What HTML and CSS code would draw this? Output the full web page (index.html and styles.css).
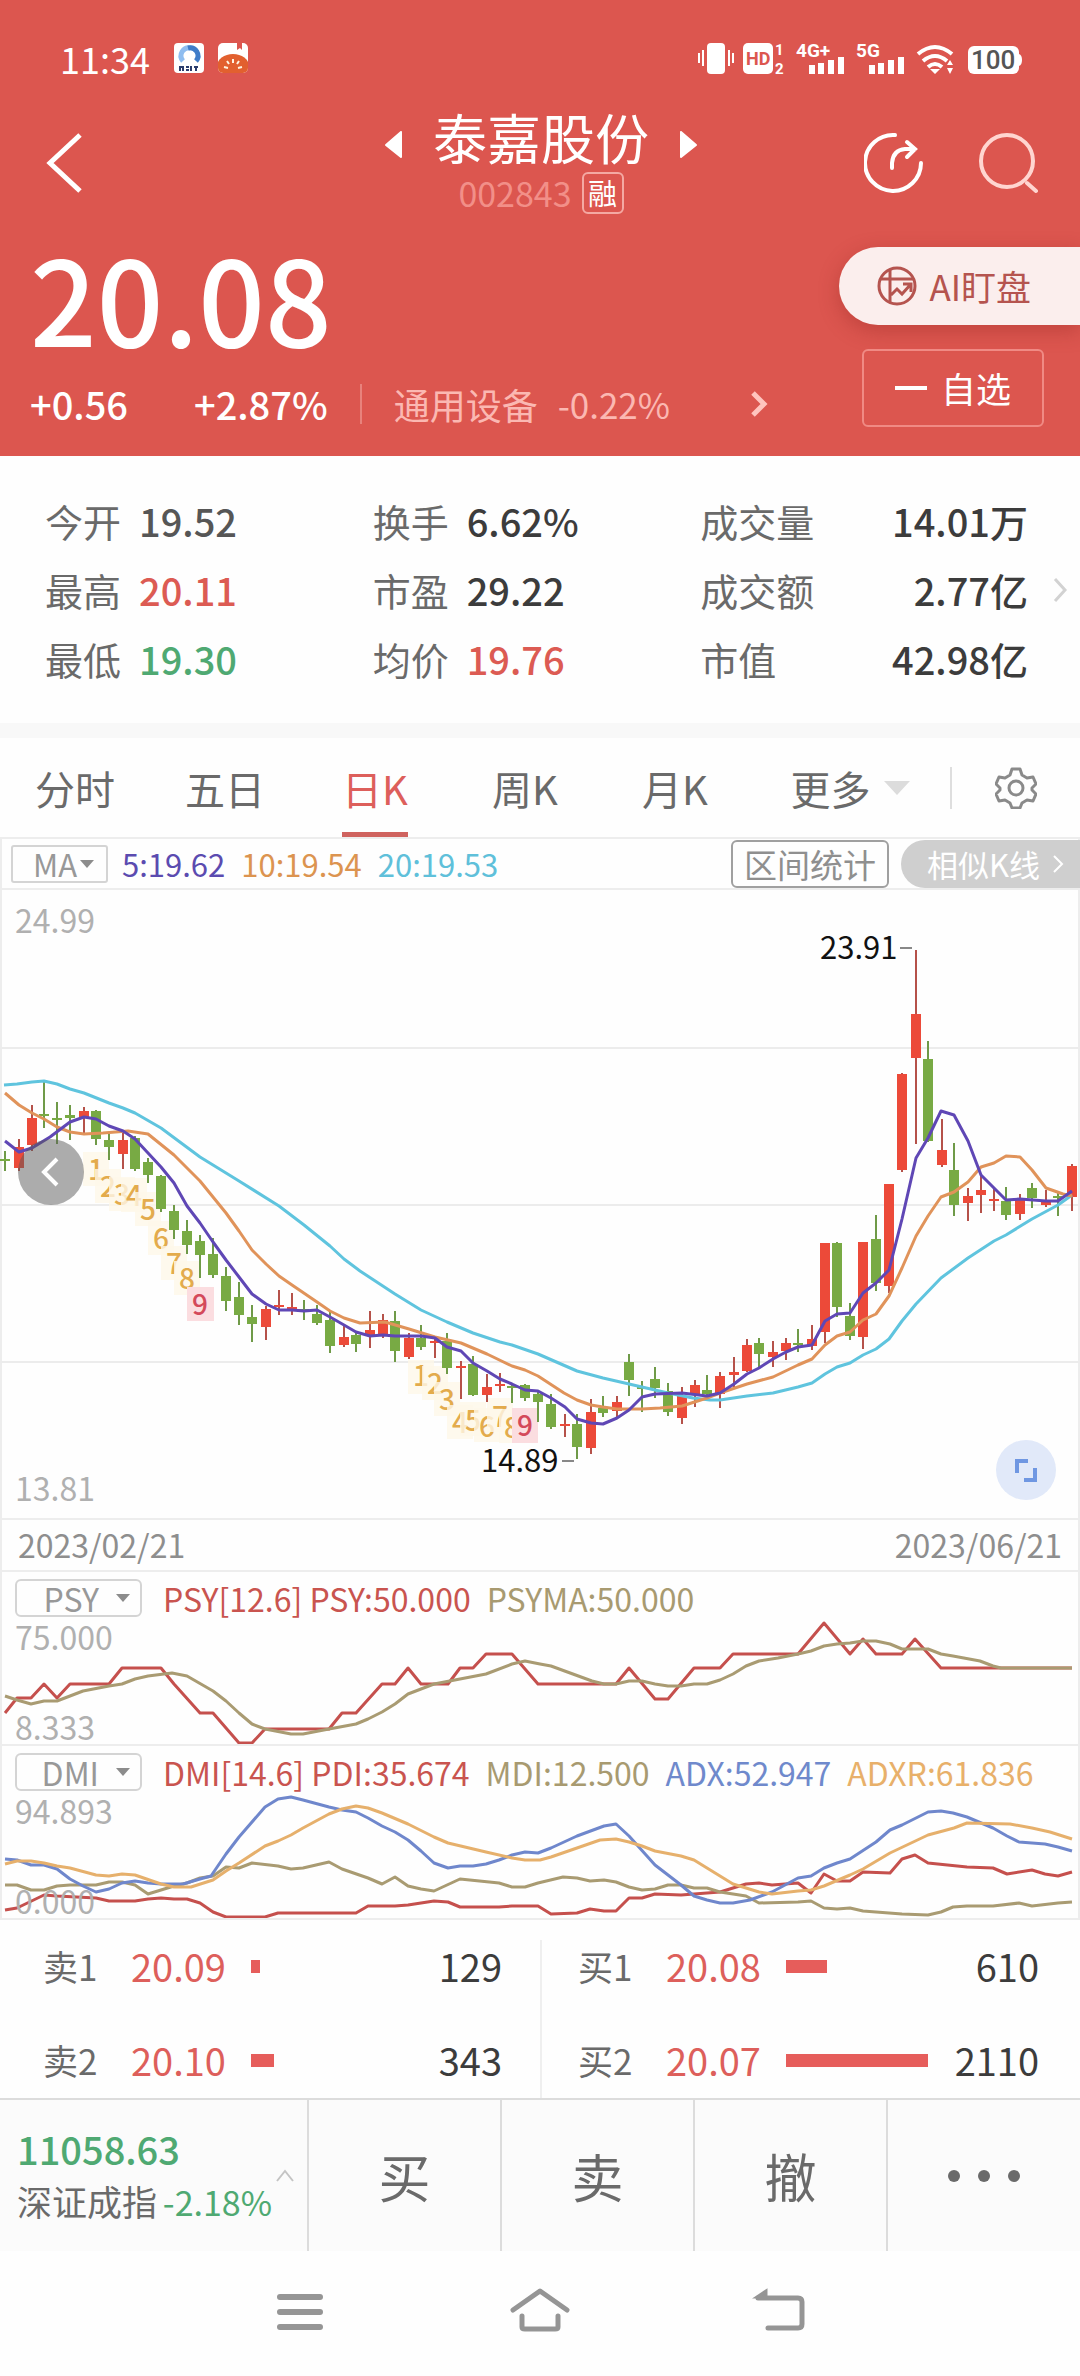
FILE: index.html
```html
<!DOCTYPE html>
<html lang="zh-CN">
<head>
<meta charset="utf-8">
<meta name="viewport" content="width=device-width, initial-scale=1">
<title>泰嘉股份 002843</title>
<link rel="stylesheet" href="styles.css">
</head>
<body>
<header class="hero">
  <div class="status">
    <span class="clock">11:34</span>
    <svg class="app-icon" width="30" height="30" viewBox="0 0 30 30"><rect width="30" height="30" rx="4" fill="#fff"/><path d="M9 18a8 8 0 0 1 8-13" fill="none" stroke="#8fbdf0" stroke-width="5"/><path d="M14 5a8 8 0 0 1 8 13" fill="none" stroke="#3f7cc8" stroke-width="5"/><path d="M5 24h4M6 23v5M9 23v5M12 24h3M12 27h3M17 23v5M20 24h4M22 24v4" stroke="#2b3d6d" stroke-width="2"/></svg>
    <svg class="app-icon" width="30" height="30" viewBox="0 0 30 30"><clipPath id="tile"><rect width="30" height="30" rx="5"/></clipPath><g clip-path="url(#tile)"><rect width="30" height="30" fill="#fff"/><path d="M19 0h5v7l-2-2-3 2z" fill="#dc564f"/><ellipse cx="15" cy="23" rx="16" ry="12" fill="#e2602f"/><path d="M15 16v4M9 18l2 3M21 18l-2 3M6 24l4 1M24 24l-4 1" stroke="#fff3e0" stroke-width="2"/></g></svg>
    <svg class="signals" width="326" height="34" viewBox="0 0 326 34" fill="#fff">
      <rect x="9" y="2" width="18" height="31" rx="4"/>
      <path d="M5 9v16M1 12v10M31 9v16M35 12v10" stroke="#fff" stroke-width="2"/>
      <rect x="45" y="2" width="30" height="31" rx="5"/>
      <text class="net dark" x="48" y="24">HD</text>
      <text class="net tiny" x="77" y="14">1</text><text class="net tiny" x="77" y="33">2</text>
      <text class="net" x="98" y="16">4G+</text>
      <path d="M111 24h6v9h-6zM120 22h6v11h-6zM130 19h6v14h-6zM140 16h6v17h-6z"/>
      <text class="net" x="158" y="16">5G</text>
      <path d="M171 24h6v9h-6zM180 22h6v11h-6zM190 19h6v14h-6zM200 16h6v17h-6z"/>
      <path d="M220 13Q237 -1 254 13M225 20Q237 10 249 20M230 26Q237 20 244 26" fill="none" stroke="#fff" stroke-width="4"/>
      <path d="M232 28h10l-5 5zM249 24l3-5 3 5zM249 27h6l-3 6z"/>
      <rect x="270" y="5" width="51" height="28" rx="6"/><path d="M321 13q3 1 3 6t-3 6z"/>
      <text class="net battery" x="273" y="28">100</text>
    </svg>
  </div>

  <div class="titlebar">
    <button class="icon-btn" aria-label="返回"><svg width="40" height="62" viewBox="0 0 40 62"><path d="M36 3L6 31l30 28" fill="none" stroke="#fff" stroke-width="5"/></svg></button>
    <div class="title">
      <div class="title-line">
        <button class="icon-btn" aria-label="上一只"><svg width="18" height="27" viewBox="0 0 18 27"><path d="M16 1v25L1 14z" fill="#fff" stroke="#fff" stroke-width="2" stroke-linejoin="round"/></svg></button>
        <h1>泰嘉股份</h1>
        <button class="icon-btn" aria-label="下一只"><svg width="18" height="27" viewBox="0 0 18 27"><path d="M2 1v25l15-12z" fill="#fff" stroke="#fff" stroke-width="2" stroke-linejoin="round"/></svg></button>
      </div>
      <div class="code-line"><span class="code">002843</span><span class="margin-tag">融</span></div>
    </div>
    <div class="actions">
      <button class="icon-btn" aria-label="分享"><svg width="60" height="62" viewBox="0 0 60 62" fill="none" stroke="#fff" stroke-width="4" stroke-linecap="round"><path d="M31 3A28 28 0 1 0 57 31"/><path d="M28 36V31Q29 18 41 17H51M43 10l8 7-8 8"/></svg></button>
      <button class="icon-btn" aria-label="搜索"><svg width="60" height="62" viewBox="0 0 60 62" fill="none" stroke="#ffd5d0" stroke-width="4" stroke-linecap="round"><circle cx="29" cy="29" r="26"/><path d="M49 51l9 8"/></svg></button>
    </div>
  </div>

  <div class="quote">
    <div class="quote-main">
      <div class="price">20.08</div>
      <div class="change-line">
        <span class="change">+0.56</span>
        <span class="change pct">+2.87%</span>
        <a class="sector" href="#sector"><span>通用设备</span><span class="sector-pct">-0.22%</span>
        <svg width="18" height="28" viewBox="0 0 18 28"><path d="M3 3l11 11L3 25" fill="none" stroke="#ffc4be" stroke-width="5"/></svg></a>
      </div>
    </div>
    <div class="quote-side">
      <button class="ai-btn"><svg width="40" height="40" viewBox="0 0 40 40" fill="none" stroke="#b5544f" stroke-width="3"><circle cx="20" cy="20" r="18"/><path d="M13 3v34M3 13h34M14 29l6-6 5 5 9-10M26 18h8v8"/></svg>AI盯盘</button>
      <button class="fav-btn"><i class="minus"></i>自选</button>
    </div>
  </div>
</header>

<section class="stats">
  <dl class="stat-grid">
    <div class="stat"><dt>今开</dt><dd>19.52</dd></div>
    <div class="stat"><dt>换手</dt><dd class="strong">6.62%</dd></div>
    <div class="stat wide"><dt>成交量</dt><dd class="strong">14.01万</dd></div>
    <div class="stat"><dt>最高</dt><dd class="up">20.11</dd></div>
    <div class="stat"><dt>市盈</dt><dd class="strong">29.22</dd></div>
    <div class="stat wide"><dt>成交额</dt><dd class="strong">2.77亿</dd></div>
    <div class="stat"><dt>最低</dt><dd class="down">19.30</dd></div>
    <div class="stat"><dt>均价</dt><dd class="up">19.76</dd></div>
    <div class="stat wide"><dt>市值</dt><dd class="strong">42.98亿</dd></div>
  </dl>
  <button class="icon-btn" aria-label="更多指标"><svg width="16" height="26" viewBox="0 0 16 26"><path d="M3 2l10 11L3 24" fill="none" stroke="#d2d2d2" stroke-width="3"/></svg></button>
</section>

<nav class="tabs">
  <button class="tab"><span>分时</span></button>
  <button class="tab"><span>五日</span></button>
  <button class="tab active"><span>日K</span></button>
  <button class="tab"><span>周K</span></button>
  <button class="tab"><span>月K</span></button>
  <button class="tab"><span>更多<svg width="26" height="14" viewBox="0 0 26 14"><path d="M0 0h26L13 14z" fill="#dcdcdc"/></svg></span></button>
  <button class="gear" aria-label="设置"><svg width="42" height="42" viewBox="0 0 42 42" fill="none" stroke="#8a8a8a" stroke-width="3" stroke-linejoin="round"><path d="M17 2h8l2 6 5 3 6-1 3 7-4 4 0 2 4 4-3 7-6-1-5 3-2 5h-8l-2-5-5-3-6 1-3-7 4-4v-2l-4-4 3-7 6 1 5-3z"/><circle cx="21" cy="21" r="7"/></svg></button>
</nav>

<main class="charts">
  <div class="ma-row">
    <button class="picker small">MA<i class="caret"></i></button>
    <span class="c-ma5">5:19.62</span><span class="c-ma10">10:19.54</span><span class="c-ma20">20:19.53</span>
    <button class="range-btn">区间统计</button>
    <button class="similar-btn">相似K线<svg width="12" height="20" viewBox="0 0 12 20"><path d="M2 2l8 8-8 8" fill="none" stroke="#fff" stroke-width="2"/></svg></button>
  </div>

  <figure class="kline">
    <svg class="plot" viewBox="0 0 1080 628">
      <path class="grid" d="M0 158H1080M0 315H1080M0 472H1080"/>
      <g class="td">
        <rect x="83" y="262" width="26" height="34"/><text x="96" y="290">1</text>
        <rect x="95" y="279" width="26" height="34"/><text x="108" y="307">2</text>
        <rect x="109" y="287" width="26" height="34"/><text x="122" y="315">3</text>
        <rect x="121" y="288" width="26" height="34"/><text x="134" y="316">4</text>
        <rect x="135" y="302" width="26" height="34"/><text x="148" y="330">5</text>
        <rect x="148" y="331" width="26" height="34"/><text x="161" y="359">6</text>
        <rect x="161" y="356" width="26" height="34"/><text x="174" y="384">7</text>
        <rect x="174" y="371" width="26" height="34"/><text x="187" y="399">8</text>
        <rect class="hot" x="187" y="397" width="27" height="34"/><text class="hot" x="200" y="425">9</text>
        <rect x="408" y="470" width="26" height="34"/><text x="421" y="496">1</text>
        <rect x="422" y="476" width="26" height="34"/><text x="435" y="504">2</text>
        <rect x="434" y="492" width="26" height="34"/><text x="447" y="520">3</text>
        <rect x="447" y="515" width="26" height="34"/><text x="460" y="543">4</text>
        <rect x="460" y="512" width="26" height="34"/><text x="473" y="541">5</text>
        <rect x="474" y="518" width="26" height="34"/><text x="487" y="547">6</text>
        <rect x="487" y="508" width="26" height="34"/><text x="500" y="537">7</text>
        <rect x="499" y="519" width="26" height="34"/><text x="512" y="548">8</text>
        <rect class="hot" x="512" y="518" width="26" height="35"/><text class="hot" x="525" y="546">9</text>
      </g>
      <path class="wick fall" d="M5 261V281M44 191V238M57 212V254M70 215V250M96 220V255M109 244V270M135 246V281M148 268V293M161 285V322M174 315V349M187 330V364M200 345V388M213 348V388M226 377V421M239 392V435M252 415V452M304 410V430M317 415V435M330 422V463M356 441V462M395 421V472M421 435V460M447 443V484M473 466V506M512 494V513M525 494V511M538 501V532M551 504V539M577 524V569M603 506V527M629 464V506M642 491V522M655 477V508M668 493V526M707 485V507M759 448V478M798 439V462M837 352V427M850 413V450M876 325V401M928 151V252M954 253V326M1006 297V330M1032 293V318M1058 303V326"/>
      <path class="body fall" d="M5 269V271M44 224V226M57 228V230M70 225V228M96 221V249M109 250V257M135 248V279M148 272V285M161 286V319M174 321V340M187 341V355M200 351V365M213 364V385M226 386V411M239 407V425M252 427V434M304 419V421M317 424V433M330 430V456M356 445V454M395 431V461M421 448V457M447 451V478M473 474V505M512 496V498M525 495V508M538 504V512M551 514V537M577 534V557M603 518V523M629 472V490M642 497V499M655 489V498M668 501V522M707 500V504M759 453V464M798 453V455M837 353V417M850 426V446M876 349V393M928 169V251M954 280V315M1006 311V325M1032 298V308M1058 306V308"/>
      <path class="wick rise" d="M19 249V281M32 215V261M84 217V244M123 243V279M266 416V450M279 400V425M292 403V425M344 435V457M370 421V458M383 424V448M409 443V469M435 448V468M461 471V509M487 484V512M500 483V502M565 524V547M591 509V564M617 506V527M682 497V534M695 490V517M720 482V518M734 467V497M747 449V482M773 451V477M786 448V470M812 435V460M825 353V453M863 352V459M889 294V403M902 183V282M916 60V254M942 229V277M968 298V331M981 284V323M994 297V321M1020 304V330M1046 300V317M1072 274V321"/>
      <path class="body rise" d="M19 257V278M32 228V255M84 221V228M123 250V264M266 419V437M279 415V417M292 417V420M344 447V455M370 440V446M383 430V444M409 448V467M435 451V453M461 476V478M487 497V505M500 494V496M565 534V536M591 522V558M617 512V521M682 506V528M695 495V504M720 486V504M734 482V485M747 455V481M773 462V467M786 453V461M812 449V456M825 353V442M863 352V447M889 294V396M902 184V280M916 124V168M942 260V275M968 306V313M981 300V305M994 309V311M1020 309V324M1046 312V315M1072 276V307"/>
      <polyline class="line s-ma20" points="4,195 17,194 32,192 44,191 57,194 70,199 84,203 109,213 123,218 135,223 161,238 200,267 239,291 279,316 304,335 330,356 344,369 360,381 395,404 421,420 447,432 473,443 500,452 512,455 538,464 577,481 603,488 642,497 668,503 693,508 710,510 720,510 747,506 773,503 798,497 812,493 825,484 837,477 850,473 863,465 876,459 889,449 902,431 916,414 941,388 968,368 994,351 1006,345 1032,329 1058,315 1072,305"/>
      <polyline class="line s-ma10" points="5,203 19,215 32,223 44,229 57,237 70,242 84,244 103,243 128,241 148,244 174,265 200,291 226,323 239,341 252,360 266,374 279,386 292,395 317,412 330,421 344,428 360,433 385,432 409,439 435,447 461,453 487,464 512,476 525,480 538,486 564,503 577,510 591,515 603,517 617,519 642,519 660,518 682,516 707,508 720,503 747,494 773,487 798,475 812,469 825,455 837,446 850,442 863,430 876,424 889,406 902,378 916,346 928,326 941,307 954,302 968,292 981,277 994,273 1006,266 1020,267 1032,280 1046,298 1063,304 1072,306"/>
      <polyline class="line s-ma5" points="5,251 19,262 32,258 50,247 70,232 84,227 96,229 109,236 123,241 135,249 148,263 161,277 174,293 187,316 200,333 213,352 226,370 239,387 252,404 266,414 279,420 292,420 304,421 317,420 330,427 344,435 356,442 370,446 383,445 395,446 421,446 435,448 447,457 461,461 473,473 487,481 500,489 512,494 525,500 538,501 551,508 565,517 577,529 591,533 603,534 617,528 629,520 642,507 655,504 682,503 707,506 720,503 734,494 747,484 759,478 773,469 786,462 798,457 812,455 825,431 837,424 850,423 863,403 876,393 889,380 902,329 916,268 928,248 941,221 954,225 968,251 981,285 994,298 1006,310 1020,309 1046,311 1058,311 1072,301"/>
      <path d="M900 58H912M562 571H574" stroke="#888" stroke-width="2"/>
      <text class="mark" x="820" y="69">23.91</text>
      <text class="mark" x="481" y="582">14.89</text>
      <text class="axis" x="15" y="43">24.99</text>
      <text class="axis" x="15" y="611">13.81</text>
    </svg>
    <button class="round prev" aria-label="更早"><svg width="24" height="30" viewBox="0 0 24 30"><path d="M18 2L5 15l13 13" fill="none" stroke="#fff" stroke-width="4"/></svg></button>
    <button class="round expand" aria-label="全屏"><svg width="24" height="24" viewBox="0 0 24 24"><path d="M14 3H3v12M10 22h11V10" fill="none" stroke="#6f97e2" stroke-width="4"/></svg></button>
  </figure>

  <div class="dates"><time>2023/02/21</time><time>2023/06/21</time></div>

  <section class="indicator">
    <svg class="plot" viewBox="0 0 1080 172">
      <polyline class="line s-red" points="5,141 17,126 31,126 44,112 57,126 70,112 109,112 122,96 161,96 174,112 200,141 213,141 239,171 252,171 265,157 329,157 342,141 356,141 382,112 395,112 408,96 421,112 448,112 460,96 473,96 486,82 512,82 538,112 616,112 629,96 655,127 668,127 694,96 720,96 733,82 798,82 824,51 850,82 863,67 876,82 902,82 915,67 941,96 1072,96"/>
      <polyline class="line s-tan" points="5,124 17,128 31,132 44,129 57,129 70,124 83,119 109,114 122,112 135,107 148,104 172,101 187,104 213,119 226,129 239,141 252,152 265,157 291,162 303,162 329,157 356,152 368,147 382,140 395,132 408,122 434,112 486,102 512,92 525,89 540,92 551,94 592,109 604,112 616,112 629,109 642,109 655,112 668,114 681,114 694,112 707,112 720,108 733,102 746,94 759,89 778,86 798,82 811,79 824,74 837,72 850,71 863,69 876,69 890,72 902,77 928,77 941,82 953,84 980,89 993,94 1001,96 1072,96"/>
    </svg>
    <div class="ind-head">
      <button class="picker">PSY<i class="caret"></i></button>
      <span class="c-red">PSY[12.6] PSY:50.000</span><span class="c-tan">PSYMA:50.000</span>
    </div>
    <div class="ind-axis"><span>75.000</span><span>8.333</span></div>
  </section>

  <section class="indicator">
    <svg class="plot" viewBox="0 0 1080 172">
      <polyline class="line s-red" points="5,164 17,162 44,149 57,150 96,152 109,155 135,155 148,153 161,152 174,153 187,153 200,157 213,166 226,171 265,171 278,167 356,167 368,160 395,160 408,159 434,155 448,156 460,161 499,161 512,160 538,160 551,168 577,167 590,163 604,165 616,165 629,152 642,152 655,148 681,149 720,146 746,138 759,137 772,139 798,137 811,147 824,128 837,135 850,135 863,126 890,127 902,113 915,109 928,117 967,121 993,122 1007,128 1032,124 1045,128 1058,130 1072,126"/>
      <polyline class="line s-tan" points="5,139 17,139 31,144 44,144 57,140 70,139 96,139 109,136 122,136 135,139 148,148 161,144 174,140 187,137 200,132 213,130 226,121 239,122 252,117 278,120 291,123 303,122 329,116 342,123 368,132 382,138 395,131 408,140 421,143 434,145 460,133 499,137 512,141 525,141 538,137 563,131 577,132 590,135 604,134 616,136 629,141 642,144 655,143 668,139 681,139 694,142 707,142 720,146 746,150 759,157 798,156 811,155 824,162 837,163 850,162 863,165 902,168 928,169 941,166 953,161 967,160 993,160 1019,157 1032,160 1058,157 1072,156"/>
      <polyline class="line s-blue" points="5,113 17,114 31,119 44,119 57,123 70,133 83,140 96,146 109,143 122,137 135,135 148,137 161,138 183,138 200,133 211,130 226,108 239,91 265,61 278,53 291,51 303,54 329,61 342,64 356,66 368,72 382,80 395,86 408,94 421,105 434,117 448,122 460,120 473,120 486,118 499,114 512,109 525,106 538,107 551,102 577,90 604,80 616,78 629,90 655,119 681,139 694,150 707,154 720,157 733,157 750,154 772,146 798,132 811,130 824,122 837,117 850,113 876,96 890,84 902,79 928,66 941,65 953,67 967,71 993,82 1007,90 1019,96 1045,98 1058,101 1072,105"/>
      <polyline class="line s-amber" points="5,118 17,115 31,115 44,117 57,120 70,122 96,129 109,130 122,128 135,129 161,138 174,141 191,141 213,134 226,125 239,117 265,100 278,95 291,89 303,82 329,68 342,63 356,60 368,62 382,67 408,78 434,91 448,97 486,106 512,112 525,114 540,114 551,111 577,102 600,94 616,93 629,96 642,100 655,105 681,110 694,114 707,122 720,130 733,138 759,146 772,148 798,145 811,144 824,140 850,129 863,123 890,107 928,89 954,82 967,77 1010,78 1032,82 1050,86 1072,93"/>
    </svg>
    <div class="ind-head">
      <button class="picker">DMI<i class="caret"></i></button>
      <span class="c-red">DMI[14.6] PDI:35.674</span><span class="c-tan">MDI:12.500</span><span class="c-blue">ADX:52.947</span><span class="c-amber">ADXR:61.836</span>
    </div>
    <div class="ind-axis"><span>94.893</span><span>0.000</span></div>
  </section>
</main>

<section class="book">
  <div class="book-side">
    <div class="level"><span class="name">卖1</span><span class="bid">20.09</span><span class="track"><i style="width:6%"></i></span><span class="qty">129</span></div>
    <div class="level"><span class="name">卖2</span><span class="bid">20.10</span><span class="track"><i style="width:16%"></i></span><span class="qty">343</span></div>
  </div>
  <div class="book-side">
    <div class="level"><span class="name">买1</span><span class="bid">20.08</span><span class="track"><i style="width:29%"></i></span><span class="qty">610</span></div>
    <div class="level"><span class="name">买2</span><span class="bid">20.07</span><span class="track"><i style="width:100%"></i></span><span class="qty">2110</span></div>
  </div>
</section>

<footer class="trade">
  <button class="index">
    <span class="index-text"><span class="index-value">11058.63</span><span class="index-line">深证成指 <b>-2.18%</b></span></span>
    <svg width="20" height="14" viewBox="0 0 20 14"><path d="M2 12l8-10 8 10" fill="none" stroke="#c4c4c4" stroke-width="2"/></svg>
  </button>
  <button class="act">买</button>
  <button class="act">卖</button>
  <button class="act">撤</button>
  <button class="act" aria-label="更多操作"><svg width="74" height="14" viewBox="0 0 74 14" fill="#6a6a6a"><circle cx="7" cy="7" r="6"/><circle cx="37" cy="7" r="6"/><circle cx="67" cy="7" r="6"/></svg></button>
</footer>

<nav class="sysnav">
  <button class="icon-btn" aria-label="最近任务"><svg width="60" height="46" viewBox="0 0 60 46" stroke="#959595" stroke-width="6" stroke-linecap="round"><path d="M10 9h40M10 24h40M10 39h40"/></svg></button>
  <button class="icon-btn" aria-label="主屏幕"><svg width="60" height="46" viewBox="0 0 60 46" fill="none" stroke="#959595" stroke-width="5" stroke-linecap="round" stroke-linejoin="round"><path d="M3 22L30 3l27 19M12 28v11q0 2 3 2h30q3 0 3-2V28"/></svg></button>
  <button class="icon-btn" aria-label="后退"><svg width="60" height="46" viewBox="0 0 60 46" fill="none" stroke="#959595" stroke-width="5" stroke-linecap="round"><path d="M8 10h40q4 0 4 4v22q0 4-4 4H18"/><path d="M7 9l9-6v6z" fill="#959595" stroke-width="3"/></svg></button>
</nav>
</body>
</html>
```
FILE: styles.css
```css
* { box-sizing: border-box; }
body {
  margin: 0;
  background: #fefefe;
  color: #6a6a6a;
  font-family: "Noto Sans CJK SC", sans-serif;
  font-size: 30px;
  line-height: 40px;
}
button {
  margin: 0;
  padding: 0;
  border: 0;
  background: none;
  color: inherit;
  font: inherit;
  white-space: nowrap;
}
a { color: inherit; text-decoration: none; }
svg { display: block; flex: none; }
h1, dl, dd, figure { margin: 0; }

/* header */
.hero { background: #dc564f; color: #fff; padding-bottom: 20px; }
.status { display: flex; align-items: center; gap: 14px; height: 104px; padding: 12px 56px 0 60px; }
.clock { font-size: 36px; line-height: 36px; margin-right: 10px; }
.signals { margin-left: auto; overflow: visible; }
.net { font: 700 19px Roboto, sans-serif; }
.net.tiny { font-size: 15px; }
.net.dark { fill: #dc564f; font-size: 18px; }
.net.battery { fill: #555; font-size: 26px; font-weight: 500; }

.titlebar { display: grid; grid-template-columns: 1fr auto 1fr; align-items: center; height: 118px; padding: 0 42px 0 44px; }
.title-line { display: flex; align-items: center; justify-content: center; gap: 30px; }
.title-line .icon-btn { padding-top: 14px; }
.title { margin-top: -6px; }
.title h1 { font-size: 54px; font-weight: 400; line-height: 62px; }
.code-line { display: flex; align-items: center; justify-content: center; gap: 10px; margin-top: 4px; }
.code { color: #f28f88; font-size: 34px; }
.margin-tag { width: 42px; height: 42px; border: 2px solid #f4a9a3; border-radius: 6px; font-size: 29px; line-height: 36px; text-align: center; }
.actions { display: flex; justify-content: flex-end; gap: 54px; }

.quote { display: flex; justify-content: space-between; padding-left: 30px; }
.price { margin-top: 6px; font-size: 117px; font-weight: 500; line-height: 136px; }
.change-line { display: flex; align-items: center; height: 64px; margin-top: 8px; font-size: 38px; font-weight: 500; }
.pct { margin-left: 66px; }
.sector { display: flex; align-items: center; margin-left: 32px; padding-left: 32px; border-left: 2px solid #e8827c; color: #fbb8b2; font-size: 36px; font-weight: 400; }
.sector-pct { margin: 0 80px 0 20px; font-size: 35px; }
.quote-side { display: flex; flex-direction: column; align-items: flex-end; gap: 24px; padding-top: 25px; }
.ai-btn { display: flex; align-items: center; gap: 12px; height: 78px; padding: 0 49px 0 38px; border-radius: 39px 0 0 39px; background: #fbeeed; box-shadow: 0 6px 20px rgba(150, 40, 35, .4); color: #b5544f; font-size: 35px; }
.fav-btn { display: flex; align-items: center; justify-content: center; gap: 14px; width: 182px; height: 78px; margin-right: 36px; border: 2px solid #f08a84; border-radius: 6px; font-size: 35px; }
.minus { width: 32px; height: 4px; background: #fff; }

/* key figures */
.stats { display: flex; align-items: center; padding: 30px 12px 30px 45px; border-bottom: 15px solid #f8f8f8; }
.stat-grid { flex: 1; display: grid; grid-template-columns: 1fr 1fr 1fr; margin-right: 24px; font-size: 38px; line-height: 69px; }
.stat { display: flex; gap: 18px; }
.stat.wide { justify-content: space-between; }
.stat dd { color: #565656; font-weight: 500; }
.stat dd.strong { color: #3c3c3c; }
.stat dd.up { color: #dc5b53; }
.stat dd.down { color: #4fa972; }

/* period tabs */
.tabs { display: grid; grid-template-columns: repeat(5, 150fr) 200fr 130fr; align-items: center; height: 101px; border-bottom: 2px solid #ededed; font-size: 40px; }
.tab { display: flex; justify-content: center; height: 99px; }
.tab span { display: flex; align-items: center; gap: 13px; height: 99px; padding-top: 5px; border-bottom: 5px solid transparent; }
.tab.active span { color: #dd5f5b; border-color: #cf625e; }
.gear { padding-left: 43px; border-left: 2px solid #dedede; }

/* charts */
.charts { box-shadow: inset 2px 0 #ededed, inset -2px 0 #ededed; font-size: 32px; }
.plot { width: 100%; height: auto; }
.ma-row { display: flex; align-items: center; gap: 16px; height: 51px; padding-left: 11px; border-bottom: 2px solid #ededed; font-size: 31px; }
.picker { display: flex; align-items: center; justify-content: flex-end; gap: 17px; width: 127px; height: 38px; margin-right: 5px; padding-right: 10px; border: 2px solid #d4d4d4; border-radius: 6px; color: #989898; line-height: 30px; }
.picker.small { gap: 3px; width: 97px; margin-right: -2px; padding-right: 12px; border-radius: 3px; }
.caret { border: solid transparent; border-top-color: #8c8c8c; border-width: 8px 7px 0; }
.range-btn { height: 48px; margin-left: auto; padding: 0 11px; border: 2px solid #a0a0a0; border-radius: 6px; color: #8f8f8f; font-size: 33px; }
.similar-btn { display: flex; align-items: center; gap: 12px; height: 48px; margin-left: -4px; padding: 0 16px 0 26px; border-radius: 24px 0 0 24px; background: #cfcfcf; color: #fff; }
.c-ma5 { color: #5b4bb0; }
.c-ma10 { color: #dc9450; }
.c-ma20 { color: #5fc0da; }
.c-red { color: #c9544f; }
.c-tan { color: #a89a70; }
.c-blue { color: #6f89cc; }
.c-amber { color: #e8b06a; }

.kline { position: relative; }
.grid { stroke: #ececec; stroke-width: 2; }
.wick { fill: none; stroke-width: 2; }
.body { fill: none; stroke-width: 10; }
.wick.rise { stroke: #b5524a; }
.body.rise { stroke: #ec4a39; }
.wick.fall { stroke: #6f9a48; }
.body.fall { stroke: #78aa44; }
.line { fill: none; stroke-width: 3; stroke-linejoin: round; }
.s-ma5 { stroke: #5f47b5; }
.s-ma10 { stroke: #e0935a; }
.s-ma20 { stroke: #5fc4de; }
.s-red { stroke: #c5504d; }
.s-tan { stroke: #a99b72; }
.s-blue { stroke: #6f87cc; }
.s-amber { stroke: #e6b06c; }
.mark { fill: #111; font-size: 31px; }
.axis { fill: #b0b0b0; font-size: 32px; }
.td rect { fill: #fef8e8; fill-opacity: .8; }
.td rect.hot { fill: #fbdde0; fill-opacity: 1; }
.td text { fill: #e3ab4c; font-size: 28px; font-weight: 500; text-anchor: middle; }
.td text.hot { fill: #d4495a; }
.round { position: absolute; display: grid; place-items: center; border-radius: 50%; }
.prev { left: 18px; top: 249px; width: 66px; height: 66px; background: rgba(90, 90, 90, .5); }
.expand { right: 24px; bottom: 18px; width: 60px; height: 60px; background: #e1e9f9; }

.dates { display: flex; justify-content: space-between; height: 54px; padding: 4px 18px 0; border: solid #ededed; border-width: 2px 0; color: #8e8e8e; }
.indicator { display: grid; border-bottom: 2px solid #ededed; }
.indicator > * { grid-column: 1; grid-row: 1; }
.ind-head { display: flex; align-items: center; align-self: start; gap: 16px; height: 36px; margin-top: 8px; padding-left: 15px; white-space: pre; }
.ind-axis { display: flex; flex-direction: column; justify-content: space-between; padding: 46px 15px 0; color: #b0b0b0; line-height: 36px; }

/* order book */
.book { display: grid; grid-template-columns: 1fr 1fr; padding-top: 20px; border-bottom: 2px solid #dcdcdc; }
.book-side { padding: 0 38px 12px 43px; }
.book-side + .book-side { border-left: 2px solid #efefef; padding: 0 41px 12px 36px; }
.level { display: grid; grid-template-columns: 88px 120px 142px 1fr; align-items: center; height: 52px; color: #6a6a6a; font-size: 35px; }
.level + .level { margin-top: 42px; }
.bid { color: #dd5f5b; font-size: 38px; }
.track i { display: block; height: 13px; background: #e65d5b; }
.qty { color: #3c3c3c; font-size: 38px; text-align: right; }

/* trade bar */
.trade { display: grid; grid-template-columns: 307fr 193fr 193fr 193fr 194fr; height: 151px; background: #fbfbfb; }
.trade > button + button { border-left: 2px solid #dcdcdc; }
.index { display: flex; align-items: center; justify-content: space-between; padding: 0 12px 0 17px; text-align: left; }
.index-text { display: grid; line-height: 52px; }
.index-value { color: #4fa972; font-size: 38px; font-weight: 500; }
.index-line { font-size: 35px; }
.index-line b { color: #4fa972; font-size: 34px; font-weight: 400; margin-left: -2px; }
.act { display: grid; place-items: center; font-size: 52px; }

.sysnav { display: flex; justify-content: center; gap: 180px; padding: 37px 0 43px; }
```
